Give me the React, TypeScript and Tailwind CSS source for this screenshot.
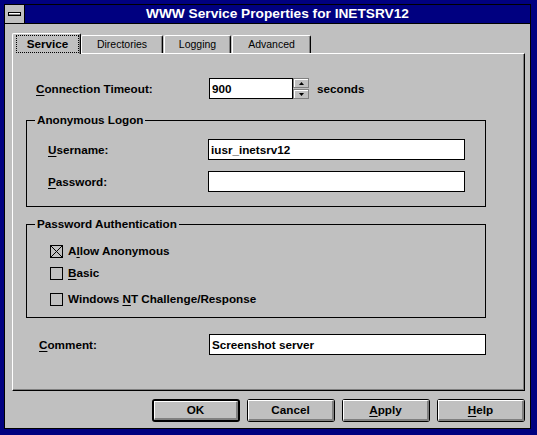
import React from 'react';

// underlined mnemonic letter
function Mn({ children }: { children: string }) {
  return <span className="underline decoration-1 underline-offset-[2px]">{children}</span>;
}

function Field({ value, width }: { value?: string; width: string }) {
  return (
    <div className={`${width} h-[21px] border border-black bg-white flex items-center pl-[2px] font-bold text-[11.7px] text-black`}>
      {value}
    </div>
  );
}

function SpinBtn({ up }: { up?: boolean }) {
  return (
    <div className="w-[16px] h-[10px] border border-[#808080] bg-[#c0c0c0] shadow-[inset_1px_1px_0_#ffffff] flex items-center justify-center">
      <svg width="5" height="3" viewBox="0 0 5 3">
        {up ? <path d="M2.5 0 L5 3 L0 3 Z" fill="#000" /> : <path d="M0 0 L5 0 L2.5 3 Z" fill="#000" />}
      </svg>
    </div>
  );
}

function Checkbox({ checked, children }: { checked?: boolean; children: React.ReactNode }) {
  return (
    <div className="flex items-center ml-[23px] h-[13px]">
      <div className="w-[13px] h-[13px] border border-black bg-[#c0c0c0] flex-none">
        {checked && (
          <svg width="11" height="11" viewBox="0 0 11 11" className="block">
            <path d="M0 0 L11 11 M11 0 L0 11" stroke="#000" strokeWidth="1" />
          </svg>
        )}
      </div>
      <span className="ml-[5px] font-bold text-[11.7px] leading-[13px] -mt-[2px] whitespace-nowrap">{children}</span>
    </div>
  );
}

function Group({ title, height, children }: { title: string; height: string; children: React.ReactNode }) {
  return (
    <div className={`relative ml-[13px] w-[460px] ${height} border border-black`}>
      <span className="absolute left-[8px] -top-[8px] px-[2px] bg-[#c0c0c0] font-bold text-[11.7px] leading-[14px]">
        {title}
      </span>
      {children}
    </div>
  );
}

function Button({ children, isDefault }: { children: React.ReactNode; isDefault?: boolean }) {
  return (
    <div className={`w-[88px] h-[23px] rounded-[3px] bg-black ${isDefault ? 'p-[2px]' : 'p-[1px]'}`}>
      <div className="w-full h-full bg-[#c0c0c0] border-t border-l border-t-white border-l-white border-r-2 border-b-2 border-r-[#808080] border-b-[#808080] flex items-center justify-center font-bold text-[11.7px]">
        {children}
      </div>
    </div>
  );
}

function Tab({ label, width, active }: { label: string; width: string; active?: boolean }) {
  if (active) {
    return (
      <div className={`relative z-10 ${width} h-[21px] -mb-[1px] bg-[#c0c0c0] border-l border-t border-l-white border-t-white border-r border-r-black rounded-t-[2px] shadow-[inset_-1px_0_0_#808080] flex items-start pt-[1px] pl-[3px]`}>
        <div className="w-[63px] h-[18px] outline outline-1 outline-dotted outline-black -outline-offset-1 flex items-center justify-center font-bold text-[11.7px]">
          {label}
        </div>
      </div>
    );
  }
  return (
    <div className={`${width} h-[18px] bg-[#c0c0c0] border-l border-t border-l-white border-t-white border-r border-r-black rounded-t-[2px] shadow-[inset_-1px_0_0_#808080] flex items-center justify-center text-[10.5px]`}>
      {label}
    </div>
  );
}

export default function App() {
  return (
    <div className="w-[537px] h-[435px] bg-[#000080] pt-[4px] pl-[4px] pr-[6px] pb-[6px] font-['Liberation_Sans',Arial,sans-serif] text-black">
      <div className="w-full h-full border border-black bg-[#c0c0c0] flex flex-col">
        {/* Title bar */}
        <div className="h-[19px] flex border-b border-black flex-none">
          <div className="w-[20px] h-full border-r border-black bg-[#c0c0c0] flex items-center justify-center">
            <div className="w-[13px] h-[4px] border border-black bg-white shadow-[inset_0_-1px_0_#808080]" />
          </div>
          <div className="flex-1 bg-[#000080] flex items-center justify-center text-white font-bold text-[13.7px] leading-none">
            WWW Service Properties for INETSRV12
          </div>
        </div>

        {/* Tabs */}
        <div className="flex items-end mt-[9px] ml-[7px]">
          <Tab label="Service" width="w-[69px]" active />
          <Tab label="Directories" width="w-[82px]" />
          <div className="w-[1px]" />
          <Tab label="Logging" width="w-[67px]" />
          <div className="w-[1px]" />
          <Tab label="Advanced" width="w-[79px]" />
        </div>

        {/* Tab panel */}
        <div className="ml-[7px] w-[513px] h-[338px] border-t border-l border-t-white border-l-white border-r border-b border-r-black border-b-black shadow-[inset_-1px_-1px_0_#808080] flex flex-col">
          <div className="flex items-center mt-[24px] h-[21px] pl-[23px]">
            <span className="w-[173px] font-bold text-[11.7px]">
              <Mn>C</Mn>onnection Timeout:
            </span>
            <Field value="900" width="w-[84px]" />
            <div className="flex flex-col gap-[1px]">
              <SpinBtn up />
              <SpinBtn />
            </div>
            <span className="ml-[8px] font-bold text-[11.7px]">seconds</span>
          </div>

          <div className="mt-[21px]">
            <Group title="Anonymous Logon" height="h-[87px]">
              <div className="flex items-center mt-[18px] pl-[21px]">
                <span className="w-[160px] font-bold text-[11.7px]">
                  <Mn>U</Mn>sername:
                </span>
                <Field value="iusr_inetsrv12" width="w-[257px]" />
              </div>
              <div className="flex items-center mt-[11px] pl-[21px]">
                <span className="w-[160px] font-bold text-[11.7px]">
                  <Mn>P</Mn>assword:
                </span>
                <Field width="w-[257px]" />
              </div>
            </Group>
          </div>

          <div className="mt-[17px]">
            <Group title="Password Authentication" height="h-[94px]">
              <div className="mt-[20px]">
                <Checkbox checked>
                  A<Mn>l</Mn>low Anonymous
                </Checkbox>
              </div>
              <div className="mt-[9px]">
                <Checkbox>
                  <Mn>B</Mn>asic
                </Checkbox>
              </div>
              <div className="mt-[13px]">
                <Checkbox>
                  Windows <Mn>N</Mn>T Challenge/Response
                </Checkbox>
              </div>
            </Group>
          </div>

          <div className="flex items-center mt-[16px] pl-[26px]">
            <span className="w-[170px] font-bold text-[11.7px]">
              <Mn>C</Mn>omment:
            </span>
            <Field value="Screenshot server" width="w-[277px]" />
          </div>
        </div>

        {/* Buttons */}
        <div className="flex justify-end gap-[7px] mt-[8px] pr-[5px]">
          <Button isDefault>OK</Button>
          <Button>Cancel</Button>
          <Button>
            <span>
              <Mn>A</Mn>pply
            </span>
          </Button>
          <Button>
            <span>
              <Mn>H</Mn>elp
            </span>
          </Button>
        </div>
      </div>
    </div>
  );
}
